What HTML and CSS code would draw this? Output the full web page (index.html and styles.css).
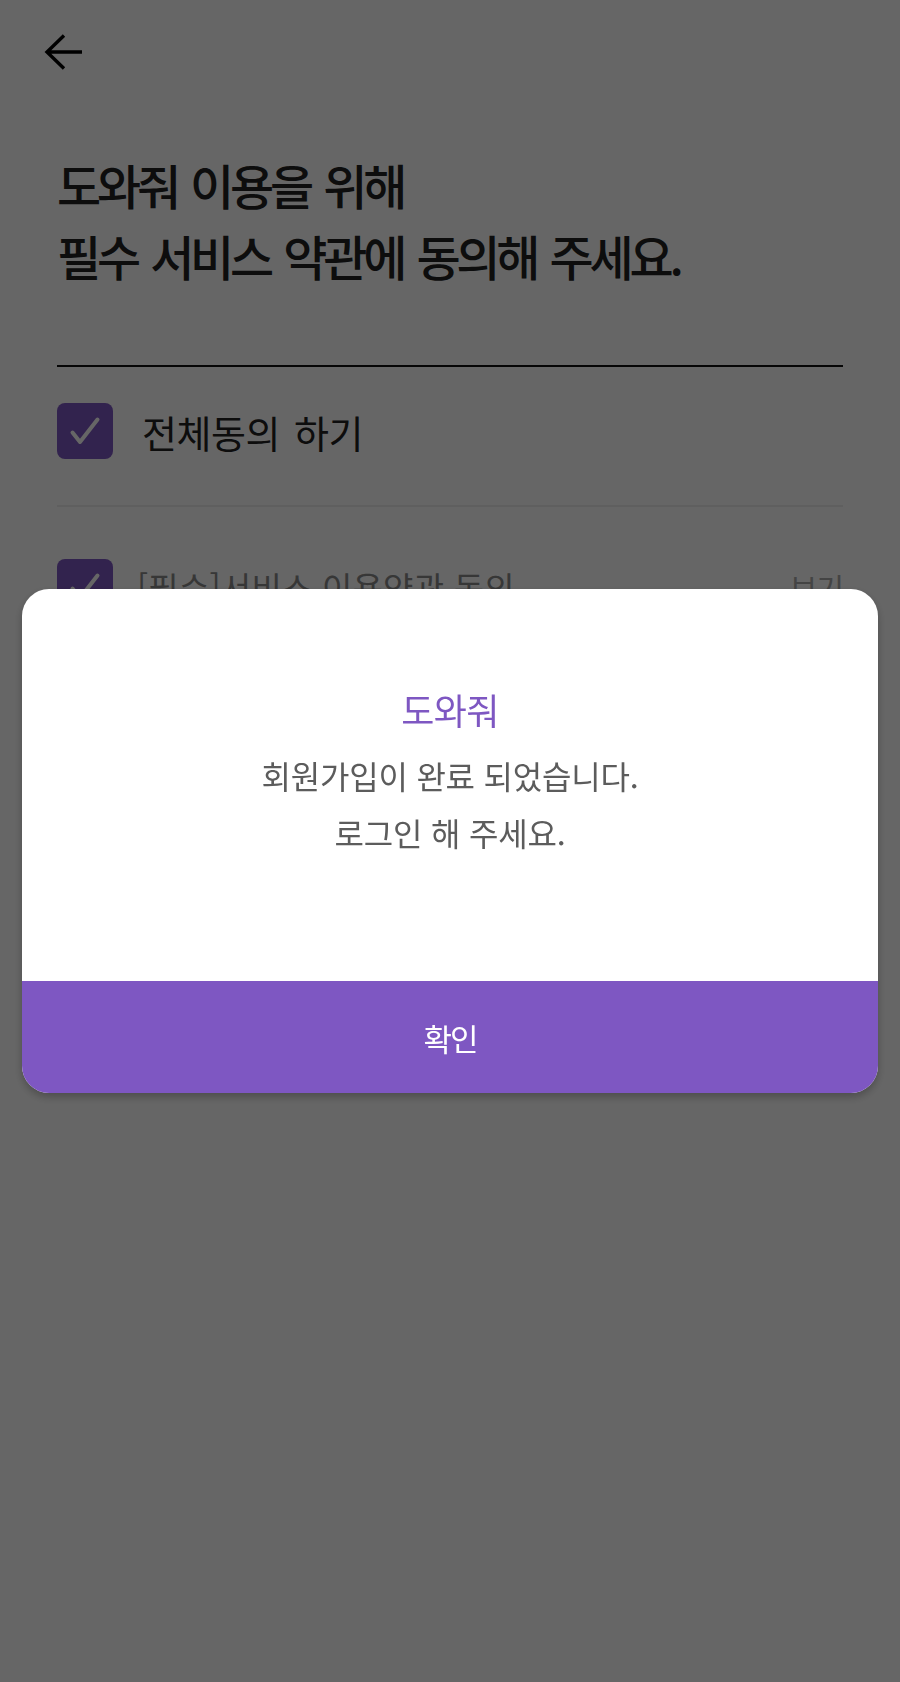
FILE: index.html
```html
<!DOCTYPE html>
<html lang="ko">
<head>
<meta charset="utf-8">
<title>약관 동의</title>
<link rel="stylesheet" href="styles.css">
</head>
<body>
<div class="page">
  <header class="topbar">
    <button class="back" aria-label="뒤로">
      <svg width="40" height="40" viewBox="0 0 40 40"><path d="M38 19H3.5M20 2.5 3 19l17 16.5" fill="none" stroke="#000" stroke-width="3.4" stroke-linecap="butt" stroke-linejoin="miter"/></svg>
    </button>
  </header>
  <h1 class="title">도와줘 이용을 위해<br>필수 서비스 약관에 동의해 주세요.</h1>
  <div class="rule-strong"></div>
  <label class="row row-all">
    <span class="check"><svg width="56" height="56" viewBox="0 0 56 56"><path d="M15.5 29.5 23 39 40.5 16.5" fill="none" stroke="#fff" stroke-width="4" stroke-linecap="round" stroke-linejoin="round"/></svg></span>
    <span class="all-label">전체동의 하기</span>
  </label>
  <div class="rule-light"></div>
  <div class="row row-item">
    <span class="check"><svg width="56" height="56" viewBox="0 0 56 56"><path d="M15.5 29.5 23 39 40.5 16.5" fill="none" stroke="#fff" stroke-width="4" stroke-linecap="round" stroke-linejoin="round"/></svg></span>
    <span class="item-label">[필수]서비스 이용약관 동의</span>
    <span class="view">보기</span>
  </div>
</div>

<div class="overlay">
  <div class="dialog" role="dialog">
    <div class="dialog-body">
      <p class="dialog-title">도와줘</p>
      <p class="dialog-msg">회원가입이 완료 되었습니다.<br>로그인 해 주세요.</p>
    </div>
    <button class="dialog-btn">확인</button>
  </div>
</div>
</body>
</html>
```

FILE: styles.css
```css
* { box-sizing: border-box; }
html, body {
  margin: 0;
  padding: 0;
  background: #fff;
}
body {
  font-family: "Noto Sans CJK KR", "Noto Sans", sans-serif;
  color: #222;
  width: 900px;
  height: 1682px;
  overflow: hidden;
}
.page {
  padding: 0 57px;
}
.topbar {
  height: 106px;
  display: flex;
  align-items: center;
  margin-left: -13px;
}
.back {
  border: 0;
  background: none;
  padding: 0;
  width: 40px;
  height: 40px;
  display: flex;
}
.title {
  margin: 43px 0 0;
  font-size: 48px;
  font-weight: 500;
  line-height: 71px;
  letter-spacing: -4.2px;
  word-spacing: 4px;
  color: #222;
}
.rule-strong {
  margin-top: 74px;
  height: 2px;
  background: #111;
}
.row {
  display: flex;
  align-items: center;
}
.row-all {
  padding: 36px 0 46px;
}
.check {
  width: 56px;
  height: 56px;
  border-radius: 8px;
  background: #7e57c2;
  flex: none;
  display: flex;
}
.all-label {
  margin-left: 29px;
  font-size: 38px;
  letter-spacing: -0.5px;
  word-spacing: 4px;
  color: #222;
}
.rule-light {
  height: 2px;
  background: #eee;
}
.row-item {
  padding-top: 52px;
}
.item-label {
  margin-left: 24px;
  font-size: 33px;
  letter-spacing: 0.2px;
  color: #8a8a8a;
  flex: 1;
}
.view {
  font-size: 30px;
  letter-spacing: -1px;
  color: #aaa;
}
.overlay {
  position: fixed;
  inset: 0;
  background: rgba(0, 0, 0, 0.6);
  display: flex;
  align-items: center;
  justify-content: center;
}
.dialog {
  width: 856px;
  height: 504px;
  background: #fff;
  border-radius: 27px;
  overflow: hidden;
  display: flex;
  flex-direction: column;
  box-shadow: 0 4px 8px rgba(0, 0, 0, 0.25);
}
.dialog-body {
  flex: 1;
  padding-top: 98px;
  text-align: center;
}
.dialog-title {
  margin: 0;
  font-size: 36px;
  line-height: 44px;
  letter-spacing: -0.6px;
  color: #7e57c2;
}
.dialog-msg {
  margin: 16px 0 0;
  font-size: 32px;
  line-height: 57px;
  letter-spacing: -0.2px;
  word-spacing: 0;
  color: #5c5c5c;
}
.dialog-btn {
  height: 112px;
  border: 0;
  background: #7e57c2;
  color: #fff;
  font-family: inherit;
  font-size: 31px;
  letter-spacing: -2px;
  padding: 0;
}
```
